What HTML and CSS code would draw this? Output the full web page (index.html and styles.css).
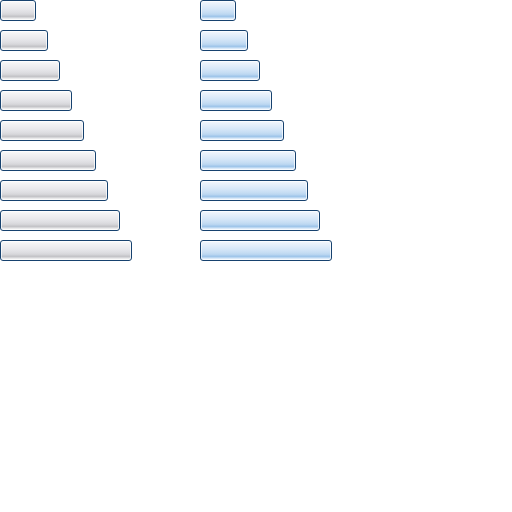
FILE: index.html
```html
<!DOCTYPE html>
<html>
<head>
<meta charset="utf-8">
<link rel="stylesheet" href="styles.css">
</head>
<body>
<div class="page">
  <div class="col">
    <div class="bar gray w1"></div>
    <div class="bar gray w2"></div>
    <div class="bar gray w3"></div>
    <div class="bar gray w4"></div>
    <div class="bar gray w5"></div>
    <div class="bar gray w6"></div>
    <div class="bar gray w7"></div>
    <div class="bar gray w8"></div>
    <div class="bar gray w9"></div>
  </div>
  <div class="col">
    <div class="bar blue w1"></div>
    <div class="bar blue w2"></div>
    <div class="bar blue w3"></div>
    <div class="bar blue w4"></div>
    <div class="bar blue w5"></div>
    <div class="bar blue w6"></div>
    <div class="bar blue w7"></div>
    <div class="bar blue w8"></div>
    <div class="bar blue w9"></div>
  </div>
</div>
</body>
</html>
```
FILE: styles.css
```css
html, body {
  margin: 0;
  padding: 0;
  background: #ffffff;
}
.page {
  display: flex;
  gap: 64px;
  align-items: flex-start;
}
.col {
  width: 136px;
  display: flex;
  flex-direction: column;
  gap: 9px;
}
.bar {
  box-sizing: border-box;
  height: 21px;
  border: 1px solid #17426f;
  border-radius: 3px;
  box-shadow: inset 0 0 0 1px rgba(255,255,255,0.7);
}
.gray {
  background: linear-gradient(to bottom,
    #fbfbfb 0px, #f2f2f4 3px, #e8e8ec 8px, #dcdce0 12px,
    #d2d2d6 14px, #c4c4c8 15px, #c4c4c8 16px, #e6e6e8 17px, #f2f2f2 19px);
}
.blue {
  background: linear-gradient(to bottom,
    #f4f8fd 0px, #e8f1fb 3px, #d6e7f8 8px, #c4dcf3 12px,
    #b6d3f0 14px, #a0c6ea 15px, #a0c6ea 16px, #d4e6f8 17px, #e8f2fc 19px);
}
.w1 { width: 36px; }
.w2 { width: 48px; }
.w3 { width: 60px; }
.w4 { width: 72px; }
.w5 { width: 84px; }
.w6 { width: 96px; }
.w7 { width: 108px; }
.w8 { width: 120px; }
.w9 { width: 132px; }
```
